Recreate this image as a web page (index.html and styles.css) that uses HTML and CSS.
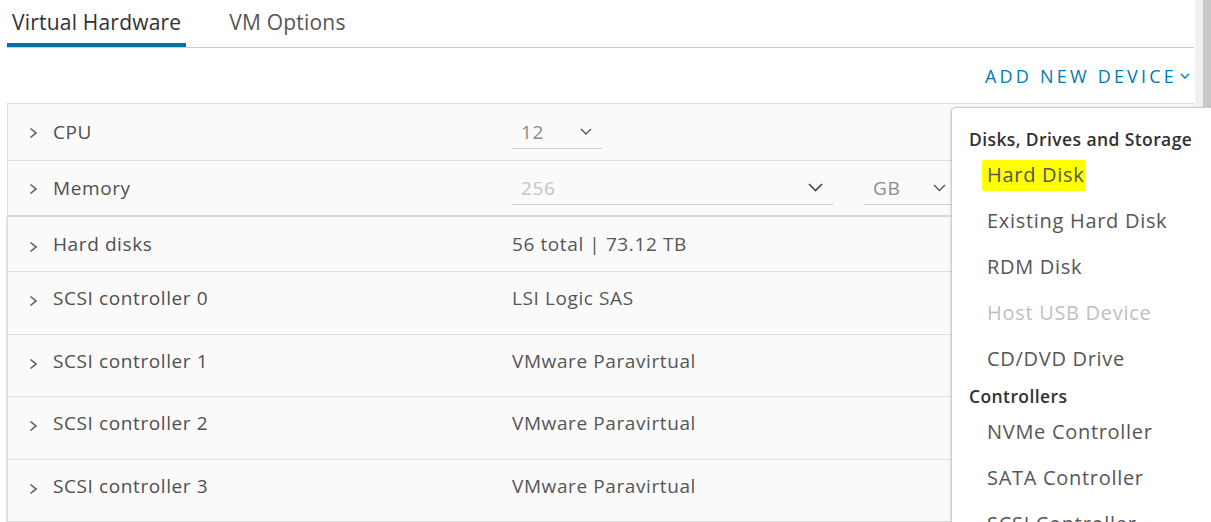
FILE: index.html
```html
<!DOCTYPE html>
<html>
<head>
<meta charset="utf-8">
<link rel="stylesheet" href="styles.css">
</head>
<body>
<div class="scrollbar"><div class="thumb"></div></div>
<div class="page">
  <div class="tabs">
    <div class="tab active">Virtual Hardware</div>
    <div class="tab">VM Options</div>
  </div>
  <div class="toolbar">
    <span class="add-btn">ADD NEW DEVICE</span>
    <svg class="add-chev" width="10" height="6" viewBox="0 0 10 6"><path d="M1 1 L5 5 L9 1" fill="none" stroke="#0079b8" stroke-width="1.4"/></svg>
  </div>
  <div class="table top-table">
    <div class="row r-cpu">
      <div class="label"><svg class="chev" width="9" height="12" viewBox="0 0 9 12"><path d="M1.5 1.5 L7 6 L1.5 10.5" fill="none" stroke="#5a5a5a" stroke-width="1.6"/></svg>CPU</div>
      <div class="value">
        <div class="select sel-cpu"><span class="sel-text">12</span><svg width="12" height="7" viewBox="0 0 12 7"><path d="M1 1 L6 6 L11 1" fill="none" stroke="#565656" stroke-width="1.4"/></svg></div>
      </div>
    </div>
    <div class="row r-mem">
      <div class="label"><svg class="chev" width="9" height="12" viewBox="0 0 9 12"><path d="M1.5 1.5 L7 6 L1.5 10.5" fill="none" stroke="#5a5a5a" stroke-width="1.6"/></svg>Memory</div>
      <div class="value">
        <div class="select sel-mem"><span class="sel-text light">256</span><svg width="15" height="9" viewBox="0 0 15 9"><path d="M1 1 L7.5 7.5 L14 1" fill="none" stroke="#454545" stroke-width="1.6"/></svg></div>
        <div class="select sel-unit"><span class="sel-text">GB</span><svg width="13" height="8" viewBox="0 0 13 8"><path d="M1 1 L6.5 6.5 L12 1" fill="none" stroke="#565656" stroke-width="1.4"/></svg></div>
      </div>
    </div>
  </div>
  <div class="table bottom-table">
    <div class="row r-hd">
      <div class="label"><svg class="chev low" width="9" height="12" viewBox="0 0 9 12"><path d="M1.5 1.5 L7 6 L1.5 10.5" fill="none" stroke="#5a5a5a" stroke-width="1.6"/></svg>Hard disks</div>
      <div class="value">56 total | 73.12 TB</div>
    </div>
    <div class="row tall">
      <div class="label"><svg class="chev low" width="9" height="12" viewBox="0 0 9 12"><path d="M1.5 1.5 L7 6 L1.5 10.5" fill="none" stroke="#5a5a5a" stroke-width="1.6"/></svg>SCSI controller 0</div>
      <div class="value">LSI Logic SAS</div>
    </div>
    <div class="row tall short">
      <div class="label"><svg class="chev low" width="9" height="12" viewBox="0 0 9 12"><path d="M1.5 1.5 L7 6 L1.5 10.5" fill="none" stroke="#5a5a5a" stroke-width="1.6"/></svg>SCSI controller 1</div>
      <div class="value">VMware Paravirtual</div>
    </div>
    <div class="row tall">
      <div class="label"><svg class="chev low" width="9" height="12" viewBox="0 0 9 12"><path d="M1.5 1.5 L7 6 L1.5 10.5" fill="none" stroke="#5a5a5a" stroke-width="1.6"/></svg>SCSI controller 2</div>
      <div class="value">VMware Paravirtual</div>
    </div>
    <div class="row tall short">
      <div class="label"><svg class="chev low" width="9" height="12" viewBox="0 0 9 12"><path d="M1.5 1.5 L7 6 L1.5 10.5" fill="none" stroke="#5a5a5a" stroke-width="1.6"/></svg>SCSI controller 3</div>
      <div class="value">VMware Paravirtual</div>
    </div>
  </div>
</div>
<div class="menu">
  <div class="menu-header">Disks, Drives and Storage</div>
  <div class="menu-item"><span class="marker">Hard Disk</span></div>
  <div class="menu-item">Existing Hard Disk</div>
  <div class="menu-item">RDM Disk</div>
  <div class="menu-item disabled">Host USB Device</div>
  <div class="menu-item">CD/DVD Drive</div>
  <div class="menu-header second">Controllers</div>
  <div class="menu-item">NVMe Controller</div>
  <div class="menu-item">SATA Controller</div>
  <div class="menu-item">SCSI Controller</div>
</div>
</body>
</html>
```
FILE: styles.css
```css
html, body {
  margin: 0;
  padding: 0;
  background: #ffffff;
  overflow: hidden;
  height: 522px;
}
body {
  font-family: "Open Sans", "Noto Sans", sans-serif;
  color: #565656;
  position: relative;
}
.scrollbar {
  position: absolute;
  top: 0;
  right: 0;
  width: 16px;
  height: 522px;
  background: #f1f1f1;
  z-index: 1;
}
.scrollbar .thumb {
  margin-left: 8px;
  width: 8px;
  height: 522px;
  background: #c8c8c8;
}
.page {
  margin-left: 7px;
  width: 1187px;
}
.tabs {
  display: flex;
  height: 47px;
  border-bottom: 1px solid #cccccc;
  gap: 38px;
}
.tab {
  padding: 10px 5px 0 5px;
  font-size: 21px;
  letter-spacing: 0.2px;
  line-height: 24px;
  color: #565656;
  box-sizing: border-box;
  height: 47px;
}
.tab.active {
  color: #313131;
  box-shadow: inset 0 -4px 0 #0072a3;
}
.toolbar {
  height: 55px;
  display: flex;
  align-items: center;
  justify-content: flex-end;
  padding-right: 4px;
}
.add-btn {
  color: #0079b8;
  font-size: 18px;
  letter-spacing: 3.2px;
  line-height: 24px;
  margin-right: 3px;
}
.add-chev {
  margin-top: 1px;
}
.table {
  background: #fafafa;
  border: 1px solid #dddddd;
  border-bottom: none;
}
.top-table {
  border-bottom: 2px solid #d7d7d7;
}
.bottom-table {
  border-top: none;
  border-left: 2px solid #dedede;
  margin-left: -1px;
}
.row {
  display: flex;
  align-items: center;
  border-bottom: 1px solid #dddddd;
  box-sizing: border-box;
  font-size: 19px;
  letter-spacing: 0.6px;
  line-height: 24px;
}
.top-table .row:last-child {
  border-bottom: none;
}
.r-cpu { height: 57px; }
.r-mem { height: 54px; }
.r-hd { height: 55px; }
.row.tall {
  height: 63px;
  align-items: flex-start;
  padding-top: 14px;
}
.row.tall.short { height: 62px; }
.label {
  width: 504px;
  display: flex;
  align-items: center;
  padding-left: 21px;
  box-sizing: border-box;
  color: #4f4f4f;
}
.chev {
  margin-right: 15px;
  flex: none;
  margin-top: 1px;
}
.chev.low {
  margin-top: 5px;
}
.value {
  display: flex;
  align-items: center;
  color: #565656;
}
.select {
  display: flex;
  align-items: center;
  justify-content: space-between;
  height: 34px;
  box-sizing: border-box;
  border-bottom: 1px solid #cfcfcf;
  padding: 0 10px 0 9px;
}
.sel-text { color: #8c8c8c; }
.sel-text.light { color: #c6c6c6; }
.sel-cpu { width: 90px; }
.sel-mem { width: 321px; padding-right: 10px; }
.sel-unit { width: 100px; margin-left: 31px; padding-right: 18px; }
.menu {
  position: absolute;
  left: 951px;
  top: 107px;
  width: 280px;
  height: 440px;
  background: #ffffff;
  border: 1px solid #cccccc;
  border-radius: 4px;
  box-shadow: 0 1px 3px rgba(0,0,0,0.2);
  padding-top: 19px;
  box-sizing: border-box;
  z-index: 2;
}
.menu-header {
  padding-left: 17px;
  font-size: 17.5px;
  letter-spacing: 0.4px;
  line-height: 24px;
  font-weight: 600;
  color: #313131;
}
.menu-header.second { margin-top: 3px; }
.menu-item {
  height: 46px;
  display: flex;
  align-items: center;
  padding-left: 35px;
  font-size: 20px;
  letter-spacing: 0.7px;
  color: #565656;
}
.menu-item.disabled { color: #c0c0c0; }
.marker {
  background: #ffff00;
  margin-left: -5px;
  padding: 3px 1px 4px 5px;
  border-radius: 2px 0 1px 3px;
  line-height: 24px;
  position: relative;
  top: 1px;
}
```
